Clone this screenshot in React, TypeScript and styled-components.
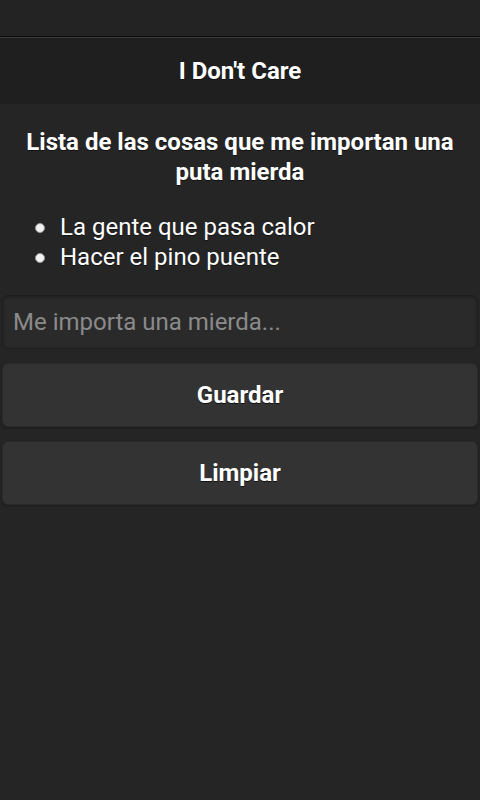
import styled, { createGlobalStyle } from 'styled-components';

const GlobalStyle = createGlobalStyle`
  html, body {
    margin: 0;
    padding: 0;
    background: #252525;
    font-family: Roboto, "Noto Sans", sans-serif;
    color: #fff;
  }
`

const Page = styled.div`
  min-height: 800px;
  display: flex;
  flex-direction: column;
  background: #252525;
`

const TopStrip = styled.div`
  height: 36px;
  background: #232323;
  border-bottom: 1px solid #0a0a0a;
`

const Header = styled.header`
  height: 66px;
  border-top: 1px solid #3a3a3a;
  background: #1f1f1f;
  display: flex;
  justify-content: center;
  align-items: center;
`

const Title = styled.h1`
  margin: 0;
  font-size: 24px;
  font-weight: 700;
  text-shadow: 0 1px 0 #111;
`

const Content = styled.main`
  padding: 20px 2px;
  display: flex;
  flex-direction: column;
`

const Heading = styled.h2`
  margin: 3px 16px 0;
  font-size: 24px;
  line-height: 30px;
  font-weight: 700;
  text-align: center;
  text-shadow: 0 1px 0 #111;
`

const List = styled.ul`
  margin: 25px 0 23px;
  padding: 0 0 0 58px;
  list-style: none;
`

const Item = styled.li`
  position: relative;
  font-size: 24px;
  line-height: 30px;
  text-shadow: 0 1px 0 #111;
  &::before {
    content: '';
    position: absolute;
    left: -25px;
    top: 11px;
    width: 8px;
    height: 8px;
    border-radius: 50%;
    background: #f2f2f2;
    border: 1px solid #999;
  }
`

const Input = styled.input`
  box-sizing: border-box;
  height: 54px;
  width: 100%;
  margin: 0 0 14px;
  padding: 0 10px;
  border: 1px solid #1e1e1e;
  border-radius: 6px;
  background: #2a2a2a;
  color: #fff;
  font-family: inherit;
  font-size: 24px;
  box-shadow: inset 0 1px 3px rgba(0, 0, 0, 0.3);
  outline: none;
  &::placeholder {
    color: #8a8a8a;
  }
`

const Button = styled.button`
  box-sizing: border-box;
  height: 64px;
  width: 100%;
  margin: 0 0 14px;
  border: 1px solid #2a2a2a;
  border-radius: 6px;
  background: #333333;
  color: #fff;
  font-family: inherit;
  font-size: 24px;
  font-weight: 700;
  text-shadow: 0 1px 0 #111;
  box-shadow: 0 1px 3px rgba(0, 0, 0, 0.3);
`

const things = ['La gente que pasa calor', 'Hacer el pino puente'];

function App() {
  return (
    <Page>
      <GlobalStyle />
      <TopStrip />
      <Header>
        <Title>I Don't Care</Title>
      </Header>
      <Content>
        <Heading>Lista de las cosas que me importan una puta mierda</Heading>
        <List>
          {things.map(t => (
            <Item key={t}>{t}</Item>
          ))}
        </List>
        <Input placeholder="Me importa una mierda..." />
        <Button>Guardar</Button>
        <Button>Limpiar</Button>
      </Content>
    </Page>
  );
}

export default App;
